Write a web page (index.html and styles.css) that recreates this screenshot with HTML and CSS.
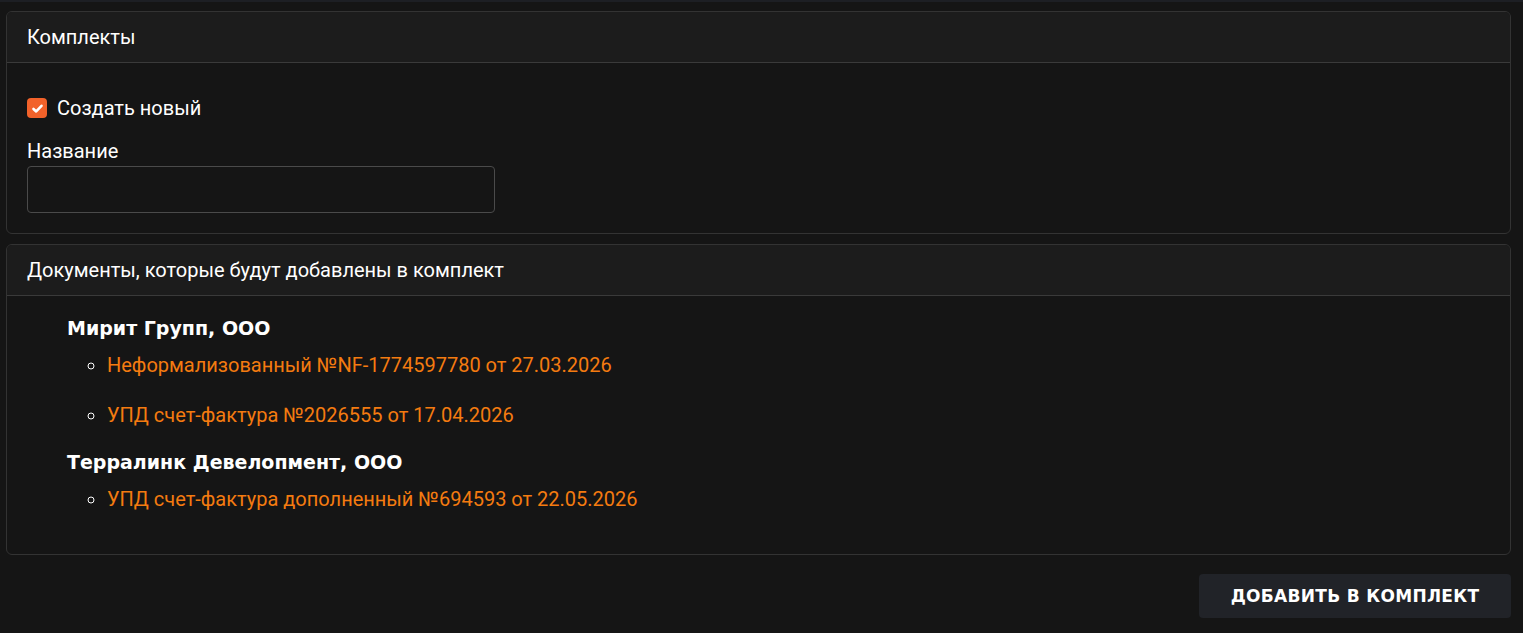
FILE: index.html
```html
<!DOCTYPE html>
<html lang="ru">
<head>
  <meta charset="UTF-8">
  <meta name="viewport" content="width=device-width, initial-scale=1.0">
  <title>Комплекты</title>
  <link rel="stylesheet" href="styles.css">
</head>
<body>
  <div class="topbar"></div>
  <div class="page">
    <section class="card">
      <div class="card-header">Комплекты</div>
      <div class="card-body card-body-form">
        <label class="check">
          <span class="check-box">
            <svg viewBox="0 0 12 12" width="13" height="13"><path d="M2.3 6.4l2.5 2.3 4.9-5.2" fill="none" stroke="#fff" stroke-width="2.4" stroke-linecap="round" stroke-linejoin="round"/></svg>
          </span>
          Создать новый
        </label>
        <div class="field">
          <label class="field-label" for="kitName">Название</label>
          <input class="field-input" id="kitName" type="text">
        </div>
      </div>
    </section>

    <section class="card">
      <div class="card-header">Документы, которые будут добавлены в комплект</div>
      <div class="card-body card-body-docs">
        <div class="org">
          <h3 class="org-name">Мирит Групп, ООО</h3>
          <ul class="doc-list">
            <li><a href="#">Неформализованный №NF-1774597780 от 27.03.2026</a></li>
            <li><a href="#">УПД счет-фактура №2026555 от 17.04.2026</a></li>
          </ul>
        </div>
        <div class="org">
          <h3 class="org-name">Терралинк Девелопмент, ООО</h3>
          <ul class="doc-list">
            <li><a href="#">УПД счет-фактура дополненный №694593 от 22.05.2026</a></li>
          </ul>
        </div>
      </div>
    </section>

    <div class="actions">
      <button class="btn" type="button">Добавить в комплект</button>
    </div>
  </div>
</body>
</html>
```

FILE: styles.css
```css
body {
  margin: 0;
  background: #151515;
  color: #fff;
  font-family: Roboto, "Liberation Sans", sans-serif;
}

.topbar {
  height: 2px;
  background: #1d1f24;
}

.page {
  padding: 9px 12px 0 6px;
  display: flex;
  flex-direction: column;
  gap: 10px;
}

.card {
  border: 1px solid #333;
  border-radius: 6px;
  background: #151515;
  overflow: hidden;
}

.card-header {
  height: 51px;
  box-sizing: border-box;
  padding: 0 20px;
  display: flex;
  align-items: center;
  background: #1c1c1c;
  border-bottom: 1px solid #3a3a3a;
  font-size: 20px;
}

.card-body-form {
  padding: 26px 20px 20px;
}

.check {
  display: flex;
  align-items: center;
  gap: 10px;
  font-size: 20px;
  height: 38px;
}

.check-box {
  width: 20px;
  height: 20px;
  border-radius: 4px;
  background: #f2622a;
  display: flex;
  align-items: center;
  justify-content: center;
}

.field {
  margin-top: 11px;
}

.field-label {
  display: block;
  font-size: 20px;
  line-height: 26px;
  margin-bottom: 2px;
}

.field-input {
  width: 468px;
  height: 47px;
  box-sizing: border-box;
  background: #151515;
  border: 1px solid #4a4a4a;
  border-radius: 4px;
  color: #fff;
  font-size: 18px;
  padding: 0 12px;
}

.card-body-docs {
  padding: 20px 20px 30px 60px;
}

.org-name {
  margin: 0;
  font-family: "DejaVu Sans", sans-serif;
  font-weight: 700;
  font-size: 19px;
  line-height: 24px;
}

.org + .org {
  margin-top: 10px;
}

.doc-list {
  margin: 0;
  padding-left: 40px;
  list-style: circle;
}

.doc-list li {
  font-size: 20px;
  line-height: 26px;
  padding: 12px 0;
}

.doc-list a {
  color: #f47b10;
  text-decoration: none;
}

.actions {
  display: flex;
  justify-content: flex-end;
  padding: 9px 0;
}

.btn {
  background: #212328;
  color: #fff;
  border: none;
  border-radius: 4px;
  height: 44px;
  width: 312px;
  font-family: "DejaVu Sans", sans-serif;
  font-weight: 700;
  font-size: 17px;
  letter-spacing: 0.3px;
  text-transform: uppercase;
  cursor: pointer;
}
```
